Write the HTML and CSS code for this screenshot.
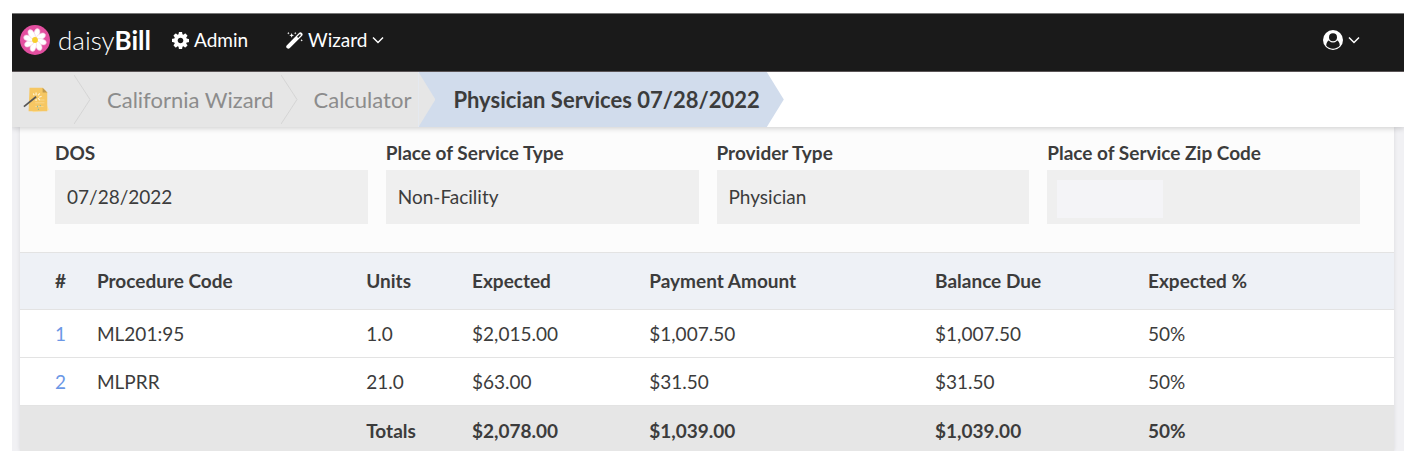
FILE: index.html
```html
<!DOCTYPE html>
<html lang="en">
<head>
    <meta charset="UTF-8">
    <meta name="viewport" content="width=device-width, initial-scale=1.0">
    <title>daisyBill - Physician Services</title>
    <link rel="stylesheet" href="styles.css">
</head>
<body>
    <div class="page">
        <header class="navbar">
            <a class="brand" href="#">
                <svg class="brand-icon" viewBox="0 0 30 30" aria-hidden="true">
                    <circle cx="15" cy="15" r="15" fill="#e34fa0"/>
                    <g fill="#fff" stroke="#f3c3dc" stroke-width="0.5">
                        <ellipse cx="15" cy="8.300" rx="2.900" ry="5" transform="rotate(15 15 15)"/>
                        <ellipse cx="15" cy="8.300" rx="2.900" ry="5" transform="rotate(60 15 15)"/>
                        <ellipse cx="15" cy="8.300" rx="2.900" ry="5" transform="rotate(105 15 15)"/>
                        <ellipse cx="15" cy="8.300" rx="2.900" ry="5" transform="rotate(150 15 15)"/>
                        <ellipse cx="15" cy="8.300" rx="2.900" ry="5" transform="rotate(195 15 15)"/>
                        <ellipse cx="15" cy="8.300" rx="2.900" ry="5" transform="rotate(240 15 15)"/>
                        <ellipse cx="15" cy="8.300" rx="2.900" ry="5" transform="rotate(285 15 15)"/>
                        <ellipse cx="15" cy="8.300" rx="2.900" ry="5" transform="rotate(330 15 15)"/>
                    </g>
                    <circle cx="15" cy="15" r="2.900" fill="#f8cf2e"/>
                </svg>
                <span class="brand-name">daisy<b>Bill</b></span>
            </a>
            <nav class="menu">
                <a class="menu-item" href="#">
                    <svg class="menu-icon" viewBox="0 128 1536 1536" aria-hidden="true">
                        <path fill="currentColor" d="M1024 896q0-106-75-181t-181-75-181 75-75 181 75 181 181 75 181-75 75-181zm512-109v222q0 12-8 23t-20 13l-185 28q-19 54-39 91 35 50 107 138 10 12 10 25t-9 23q-27 37-99 108t-94 71q-12 0-26-9l-138-108q-44 23-91 38-16 136-29 186-7 28-36 28h-222q-14 0-24.500-8.500t-11.500-21.500l-28-184q-49-16-90-37l-141 107q-10 9-25 9-14 0-25-11-126-114-165-168-7-10-7-23 0-12 8-23 15-21 51-66.500t54-70.500q-27-50-41-99l-183-27q-13-2-21-12.500t-8-23.500v-222q0-12 8-23t19-13l186-28q14-46 39-92-40-57-107-138-10-12-10-24 0-10 9-23 26-36 98.500-107.500t94.500-71.500q13 0 26 10l138 107q44-23 91-38 16-136 29-186 7-28 36-28h222q14 0 24.500 8.500t11.500 21.500l28 184q49 16 90 37l142-107q9-9 24-9 13 0 25 10 129 119 165 170 7 8 7 22 0 12-8 23-15 21-51 66.500t-54 70.500q26 50 41 98l183 28q13 2 21 12.500t8 23.500z"/>
                    </svg>
                    Admin
                </a>
                <button class="menu-item" type="button">
                    <svg class="menu-icon" viewBox="0 0 18 18" aria-hidden="true">
                        <path d="M2.500 15.500L15.300 2.700" stroke="currentColor" stroke-width="4.400" stroke-linecap="round"/>
                        <path d="M12.300 5.700L15.300 2.700" stroke="#1a1a1a" stroke-width="1.600"/>
                        <path fill="currentColor" d="M6 1l.7 1.800 1.800.7-1.800.7L6 6l-.7-1.800-1.800-.7 1.800-.7zM2.500 0l.4.900.9.400-.9.400-.4.900-.4-.9-.9-.4.900-.4zM9.800 0l.4.900.9.400-.9.400-.4.900-.4-.9-.9-.4.900-.4zM16.600 7.500l.4.900.9.400-.9.400-.4.900-.4-.9-.9-.4.900-.4z"/>
                    </svg>
                    Wizard
                    <svg class="caret" viewBox="0 0 12 8" aria-hidden="true"><path d="M1 1.500l5 5 5-5" fill="none" stroke="currentColor" stroke-width="1.500"/></svg>
                </button>
            </nav>
            <button class="menu-item account" type="button" aria-label="Account">
                <svg class="account-icon" viewBox="0 0 20 20" aria-hidden="true">
                    <circle cx="10" cy="10" r="10" fill="currentColor"/>
                    <path d="M3.200 15.400c.2-3 1.300-4.700 3.200-5.200h7.200c1.900.5 3 2.200 3.200 5.200A8.600 8.600 0 0 1 3.200 15.400z" fill="#1a1a1a"/>
                    <circle cx="10" cy="7.300" r="5.200" fill="currentColor"/>
                    <circle cx="10" cy="7.300" r="4" fill="#1a1a1a"/>
                </svg>
                <svg class="caret" viewBox="0 0 12 8" aria-hidden="true"><path d="M1 1.500l5 5 5-5" fill="none" stroke="currentColor" stroke-width="1.500"/></svg>
            </button>
        </header>

        <nav class="breadcrumb" aria-label="Breadcrumb">
            <a class="crumb crumb-home" href="#" aria-label="Home">
                <svg class="home-icon" viewBox="0 0 30 30" aria-hidden="true">
                    <path d="M8 25l18-4 2 5-17 2z" fill="#fbe2a4"/>
                    <path d="M7 2h14l5 5v20H6z" fill="#f6c763"/>
                    <path d="M21 2l5 5h-5z" fill="#c09a4d"/>
                    <path d="M13 18h10M17 15h6M13 22h9" stroke="#fad88c" stroke-width="1"/>
                    <path d="M14 7v3M11 8l1 2M18 8l-2 2M20 11l-3 1M18 15l-2-2M14 16v-2" stroke="#fff5d6" stroke-width="1.200"/>
                    <path d="M15 22h1M18 21h1M16 25h1" stroke="#85b7a0" stroke-width="1.500"/>
                    <path d="M1 22L14 11.500" stroke="#555" stroke-width="1.800"/>
                </svg>
            </a>
            <svg class="divider" viewBox="0 0 17 56" preserveAspectRatio="none" aria-hidden="true"><path d="M0 3l16 25L0 53" fill="none" stroke="#d4d4d4"/></svg>
            <a class="crumb" href="#">California Wizard</a>
            <svg class="divider" viewBox="0 0 17 56" preserveAspectRatio="none" aria-hidden="true"><path d="M0 3l16 25L0 53" fill="none" stroke="#d4d4d4"/></svg>
            <a class="crumb" href="#">Calculator</a>
            <a class="crumb crumb-active" href="#" aria-current="page">Physician Services 07/28/2022</a>
        </nav>

        <main class="content">
            <div class="panel">
                <form class="fields">
                    <div class="field">
                        <label for="dos">DOS</label>
                        <div class="control"><input id="dos" type="text" value="07/28/2022" readonly></div>
                    </div>
                    <div class="field">
                        <label for="place">Place of Service Type</label>
                        <div class="control"><input id="place" type="text" value="Non-Facility" readonly></div>
                    </div>
                    <div class="field">
                        <label for="provider">Provider Type</label>
                        <div class="control"><input id="provider" type="text" value="Physician" readonly></div>
                    </div>
                    <div class="field">
                        <label for="zip">Place of Service Zip Code</label>
                        <div class="control control-hidden"><input id="zip" type="text" readonly></div>
                    </div>
                </form>

                <table class="procedures">
                    <thead>
                        <tr>
                            <th class="col-number">#</th>
                            <th class="col-code">Procedure Code</th>
                            <th class="col-units">Units</th>
                            <th class="col-expected">Expected</th>
                            <th class="col-payment">Payment Amount</th>
                            <th class="col-balance">Balance Due</th>
                            <th>Expected %</th>
                        </tr>
                    </thead>
                    <tbody>
                        <tr>
                            <td><a href="#">1</a></td>
                            <td>ML201:95</td>
                            <td>1.0</td>
                            <td>$2,015.00</td>
                            <td>$1,007.50</td>
                            <td>$1,007.50</td>
                            <td>50%</td>
                        </tr>
                        <tr>
                            <td><a href="#">2</a></td>
                            <td>MLPRR</td>
                            <td>21.0</td>
                            <td>$63.00</td>
                            <td>$31.50</td>
                            <td>$31.50</td>
                            <td>50%</td>
                        </tr>
                    </tbody>
                    <tfoot>
                        <tr>
                            <td></td>
                            <td></td>
                            <td>Totals</td>
                            <td>$2,078.00</td>
                            <td>$1,039.00</td>
                            <td>$1,039.00</td>
                            <td>50%</td>
                        </tr>
                    </tfoot>
                </table>
            </div>
        </main>
    </div>
</body>
</html>
```
FILE: styles.css
```css
* {
    box-sizing: border-box;
}
body {
    margin: 0;
    padding: 13px 12px;
    background: white;
    color: #3c3c3c;
    font-family: Lato, "Open Sans", sans-serif;
    font-size: 19px;
    line-height: 24px;
}
a {
    color: inherit;
    text-decoration: none;
}

/* top bar */
.navbar {
    display: flex;
    align-items: center;
    height: 59px;
    padding: 0 44px 5px 8px;
    background: #1a1a1a;
    border-top: 1px solid #777;
    border-bottom: 1px solid #5a5456;
    color: white;
}
.brand {
    display: flex;
    align-items: center;
    gap: 8px;
}
.brand-icon {
    width: 30px;
    height: 30px;
}
.brand-name {
    font-size: 26px;
    font-weight: 300;
}
.brand-name b {
    font-weight: 700;
}
.menu {
    display: flex;
    gap: 38px;
    margin-left: 21px;
}
.menu-item {
    display: flex;
    align-items: center;
    gap: 5px;
    padding: 0;
    border: none;
    background: none;
    color: white;
    font: inherit;
    cursor: pointer;
}
.menu-icon {
    width: 17px;
    height: 17px;
}
.caret {
    width: 12px;
    height: 8px;
}
.account {
    margin-left: auto;
}
.account-icon {
    width: 20px;
    height: 20px;
}

/* breadcrumb */
.breadcrumb {
    position: relative;
    z-index: 1;
    display: flex;
    height: 55px;
    background: white;
    box-shadow: 0 1px 6px rgba(0, 0, 0, 0.2);
    clip-path: inset(0 0 -10px 0);
    font-size: 22px;
    white-space: nowrap;
}
.crumb {
    display: flex;
    align-items: center;
    padding: 0 7px 0 16px;
    background: #e6e6e6;
    color: #8c8c8c;
}
.crumb-home {
    padding: 0 23px 0 11px;
}
.home-icon {
    width: 28px;
    height: 28px;
}
.divider {
    width: 17px;
    height: 55px;
    background: #e6e6e6;
}
.crumb-active {
    padding: 0 24px 0 35px;
    background: #d1dcec;
    color: #3c3c3c;
    font-weight: 700;
    clip-path: polygon(0 0, calc(100% - 17px) 0, 100% 50%, calc(100% - 17px) 100%, 0 100%);
}
.crumb-active::before {
    content: "";
    align-self: stretch;
    width: 17px;
    margin-left: -35px;
    margin-right: 18px;
    background: #e6e6e6;
    clip-path: polygon(0 0, 100% 50%, 0 100%);
}

/* content */
.content {
    padding: 0 10px 0 8px;
    background: #f1f1f4;
}
.panel {
    background: #fcfcfc;
    box-shadow: 0 0 4px rgba(0, 0, 0, 0.1);
    clip-path: inset(0 -8px);
}
.fields {
    display: grid;
    grid-template-columns: repeat(4, 1fr);
    gap: 18px;
    padding: 14px 34px 28px 35px;
}
.field label {
    display: block;
    margin-bottom: 5px;
    font-weight: 700;
}
.control {
    height: 54px;
    padding: 0 12px 2px;
    background: #efefef;
}
.control input {
    width: 100%;
    height: 100%;
    padding: 0;
    border: none;
    background: none;
    color: inherit;
    font: inherit;
}
.control-hidden {
    padding: 10px;
}
.control-hidden input {
    display: block;
    width: 106px;
    height: 38px;
    background: #f4f4f7;
}

/* table */
.procedures {
    width: 100%;
    table-layout: fixed;
    border-collapse: separate;
    border-spacing: 0;
    background: white;
}
.procedures th,
.procedures td {
    padding: 12px 0 11px;
    text-align: left;
    white-space: nowrap;
    border-bottom: 1px solid #e3e3e3;
}
.procedures th {
    padding: 16px 0;
    background: #eef1f6;
    border-top: 1px solid #e3e3e3;
    font-weight: 700;
}
.procedures tr > :first-child {
    padding-left: 35px;
}
.procedures td a {
    color: #6b97e6;
}
.procedures tfoot td {
    padding: 13px 0 8px;
    background: #e6e6e6;
    border-bottom: none;
    font-weight: 700;
}
.col-number {
    width: 5.6%;
}
.col-code {
    width: 19.6%;
}
.col-units {
    width: 7.7%;
}
.col-expected {
    width: 12.9%;
}
.col-payment {
    width: 20.8%;
}
.col-balance {
    width: 15.5%;
}
```
